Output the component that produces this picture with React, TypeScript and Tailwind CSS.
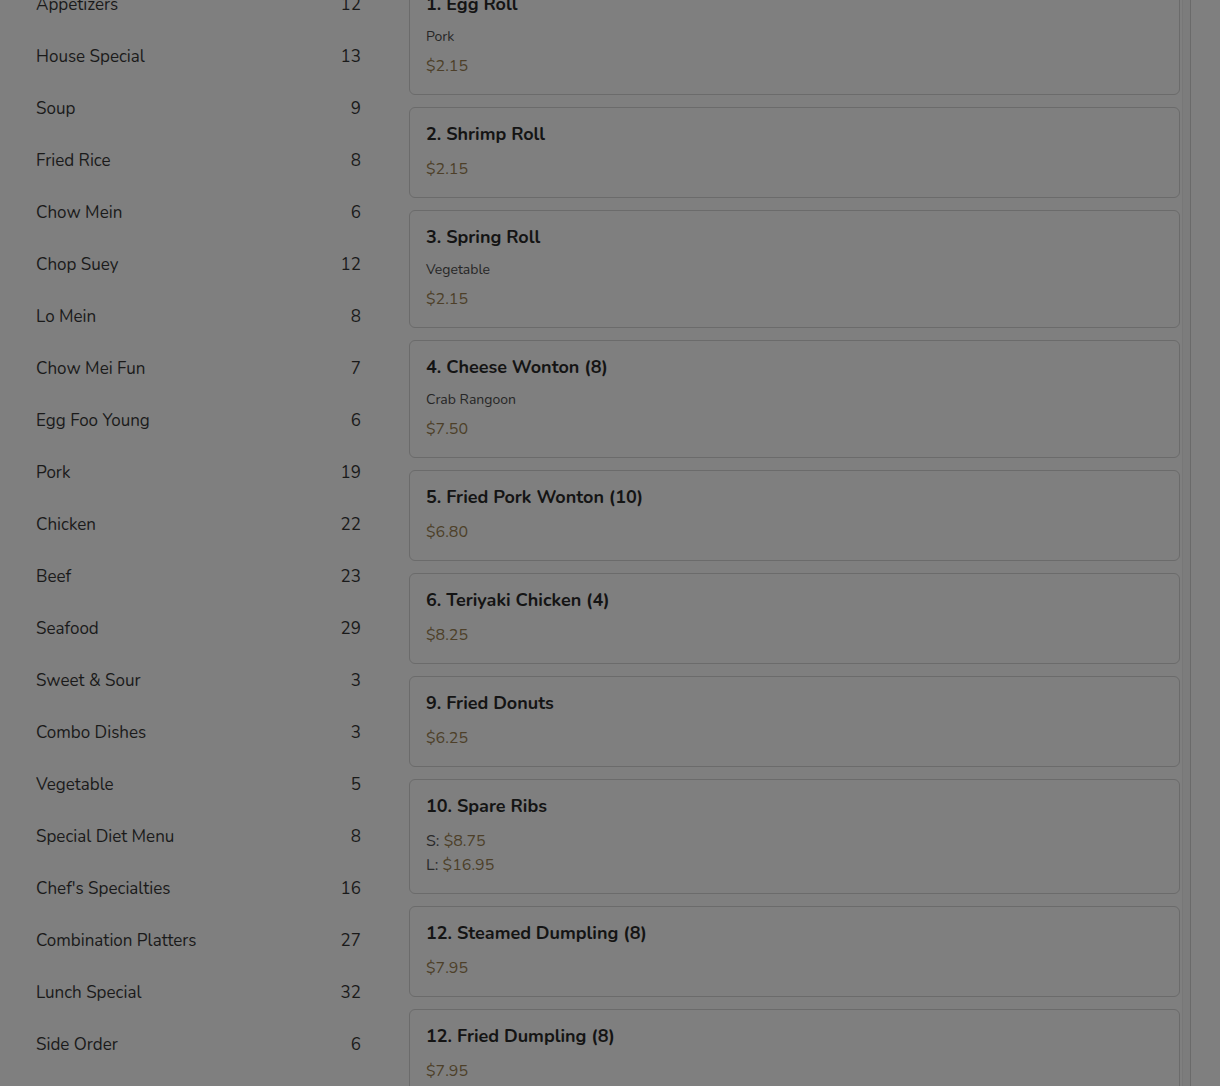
import React from "react";

const cats: [string, number][] = [
  ["Appetizers", 12],
  ["House Special", 13],
  ["Soup", 9],
  ["Fried Rice", 8],
  ["Chow Mein", 6],
  ["Chop Suey", 12],
  ["Lo Mein", 8],
  ["Chow Mei Fun", 7],
  ["Egg Foo Young", 6],
  ["Pork", 19],
  ["Chicken", 22],
  ["Beef", 23],
  ["Seafood", 29],
  ["Sweet & Sour", 3],
  ["Combo Dishes", 3],
  ["Vegetable", 5],
  ["Special Diet Menu", 8],
  ["Chef's Specialties", 16],
  ["Combination Platters", 27],
  ["Lunch Special", 32],
  ["Side Order", 6],
];

type Item = { name: string; desc?: string; prices: { label?: string; value: string }[] };

const items: Item[] = [
  { name: "1. Egg Roll", desc: "Pork", prices: [{ value: "$2.15" }] },
  { name: "2. Shrimp Roll", prices: [{ value: "$2.15" }] },
  { name: "3. Spring Roll", desc: "Vegetable", prices: [{ value: "$2.15" }] },
  { name: "4. Cheese Wonton (8)", desc: "Crab Rangoon", prices: [{ value: "$7.50" }] },
  { name: "5. Fried Pork Wonton (10)", prices: [{ value: "$6.80" }] },
  { name: "6. Teriyaki Chicken (4)", prices: [{ value: "$8.25" }] },
  { name: "9. Fried Donuts", prices: [{ value: "$6.25" }] },
  {
    name: "10. Spare Ribs",
    prices: [
      { label: "S:", value: "$8.75" },
      { label: "L:", value: "$16.95" },
    ],
  },
  { name: "12. Steamed Dumpling (8)", prices: [{ value: "$7.95" }] },
  { name: "12. Fried Dumpling (8)", prices: [{ value: "$7.95" }] },
];

export default function App() {
  return (
    <div
      className="w-[1220px] h-[1086px] overflow-hidden bg-[#7f7f7f] flex"
      style={{ fontFamily: "'Nunito', Lato, 'Noto Sans', sans-serif" }}
    >
      <div className="w-[397px] shrink-0 px-[36px] mt-[-21px] flex flex-col">
        {cats.map(([n, c]) => (
          <div key={n} className="h-[52px] flex items-center justify-between text-[17px] text-[#1a1a1a]">
            <span>{n}</span>
            <span>{c}</span>
          </div>
        ))}
      </div>
      <div className="w-[12px] shrink-0" />
      <div className="w-[771px] shrink-0 mt-[-23px] flex flex-col gap-3">
        {items.map((it, i) => (
          <div key={i} className="border border-[#6b6b6b] rounded-[6px] bg-[#7f7f7f] p-4">
            <div className="text-[18px] leading-[20px] font-bold text-[#141414]">{it.name}</div>
            {it.desc && (
              <div className="mt-[13px] text-[14px] leading-[20px] text-[#262626]">{it.desc}</div>
            )}
            <div className={it.desc ? "mt-[7px]" : "mt-[13px]"}>
              {it.prices.map((p, j) => (
                <div key={j} className="text-[16px] leading-[24px]">
                  {p.label && <span className="text-[#2a2a2a]">{p.label} </span>}
                  <span className="text-[#4d3f29]">{p.value}</span>
                </div>
              ))}
            </div>
          </div>
        ))}
      </div>
      <div className="w-[2px] shrink-0" />
      <div className="w-px shrink-0 bg-[#777777]" />
      <div className="w-[7px] shrink-0 bg-[#7c7c7c]" />
      <div className="w-px shrink-0 bg-[#6a6a6a]" />
      <div className="flex-1" />
    </div>
  );
}
